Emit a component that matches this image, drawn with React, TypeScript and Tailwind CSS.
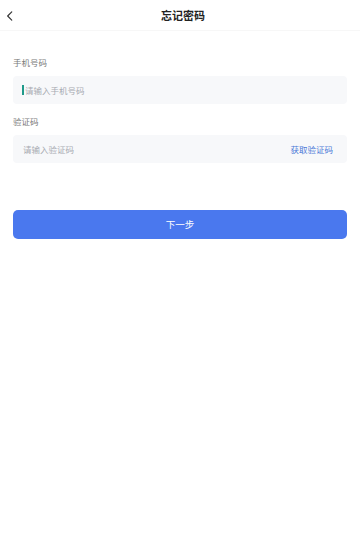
import React from "react";

const font = { fontFamily: '"Noto Sans CJK SC", "Noto Sans", sans-serif' };

export default function App() {
  return (
    <div className="min-h-[556px] w-full bg-white" style={font}>
      <header className="relative flex h-[31px] items-center justify-center border-b border-[#f7f7f7]">
        <button className="absolute left-[2px] top-[8px] flex h-4 w-4 items-center justify-center text-[#333]">
          <svg viewBox="0 0 24 24" className="h-[14px] w-[14px]" fill="none" stroke="currentColor" strokeWidth="2" strokeLinecap="round" strokeLinejoin="round">
            <path d="M15 5l-7 7 7 7" />
          </svg>
        </button>
        <h1 className="pl-[6px] text-[11px] font-semibold text-[#222]">忘记密码</h1>
      </header>

      <main className="px-[13px] pt-[25px]">
        <label className="block text-[8.5px] leading-[13px] text-[#7a7a7a]">手机号码</label>
        <div className="mt-[7px] flex h-[28px] items-center rounded-[4px] bg-[#f7f8fa] pl-[9px] pr-[14px]">
          <span className="mr-[1px] h-[10px] w-[2px] bg-[#1f9a8a]" />
          <span className="text-[8.5px] text-[#a8abb2]">请输入手机号码</span>
        </div>

        <label className="mt-[11px] block text-[8.5px] leading-[13px] text-[#7a7a7a]">验证码</label>
        <div className="mt-[7px] flex h-[28px] items-center justify-between rounded-[4px] bg-[#f7f8fa] pl-[10px] pr-[14px]">
          <span className="text-[8.5px] text-[#a8abb2]">请输入验证码</span>
          <button className="text-[8.5px] text-[#4d7ad8]">获取验证码</button>
        </div>

        <button className="mt-[47px] flex h-[29px] w-full items-center justify-center rounded-[5px] bg-[#4a78ee] text-[9.5px] text-white">
          下一步
        </button>
      </main>
    </div>
  );
}
